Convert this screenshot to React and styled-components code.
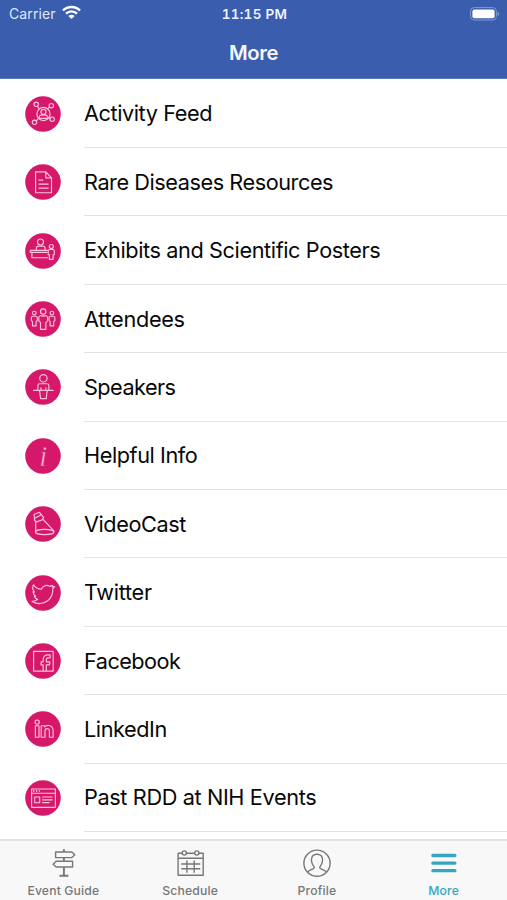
import React from "react";
import styled, { createGlobalStyle } from "styled-components";

const GlobalStyle = createGlobalStyle`
  * { box-sizing: border-box; }
  html, body { margin: 0; padding: 0; background: #fff; overflow: hidden; }
`;

const Screen = styled.div`
  width: 507px;
  height: 900px;
  display: flex;
  flex-direction: column;
  overflow: hidden;
  background: #fff;
  font-family: Inter, "Liberation Sans", sans-serif;
`;

const Header = styled.header`
  flex: 0 0 79px;
  background: #3a5dae;
  border-bottom: 1px solid #5c78ba;
  color: #fff;
`;

const StatusBar = styled.div`
  height: 27px;
  display: grid;
  grid-template-columns: 1fr auto 1fr;
  align-items: center;
  padding: 0 7px 0 9px;
`;

const Carrier = styled.div`
  display: flex;
  align-items: center;
  gap: 6px;
  font-size: 14px;
  letter-spacing: 0.12px;
  color: #dfe8fb;
`;

const Wifi = styled.svg`
  display: block;
  margin-bottom: 2px;
`;

const Clock = styled.div`
  font-size: 13.5px;
  font-weight: 600;
  font-variant-numeric: tabular-nums;
  letter-spacing: 0.3px;
  color: #eef3ff;
`;

const Battery = styled.svg`
  justify-self: end;
  display: block;
`;

const Title = styled.h1`
  margin: 0;
  height: 51px;
  line-height: 51px;
  text-align: center;
  font-size: 20.3px;
  font-weight: 600;
  letter-spacing: -0.4px;
  color: #f4f7ff;
`;

const Menu = styled.ul`
  flex: 1 1 0;
  min-height: 0;
  margin: 0;
  padding: 0.7px 0 0;
  list-style: none;
  overflow: hidden;
`;

const Row = styled.li`
  height: 68.4px;
  display: flex;
  align-items: center;
  padding-left: 24.6px;
`;

const Badge = styled.svg`
  flex: 0 0 36px;
  width: 36px;
  height: 36px;
  margin-right: 23.4px;
  fill: none;
  stroke: #fac3dc;
  stroke-width: 1.15;
  stroke-linejoin: round;
  stroke-linecap: round;
`;

const Label = styled.div`
  flex: 1;
  height: 100%;
  display: flex;
  align-items: center;
  border-bottom: 1px solid #e3e3e5;
  color: #080808;
  font-size: 21.7px;
  letter-spacing: ${(p) => p.$spacing}px;
  white-space: nowrap;
`;

const TabBar = styled.nav`
  flex: 0 0 61px;
  display: grid;
  grid-template-columns: repeat(4, 1fr);
  background: #f8f8f8;
  border-top: 2px solid #e2e2e3;
`;

const Tab = styled.div`
  display: flex;
  flex-direction: column;
  align-items: center;
  padding-top: 7px;
  color: ${(p) => (p.$active ? "#35a5c0" : "#777")};
`;

const TabIcon = styled.svg`
  width: 30px;
  height: 30px;
  fill: none;
  stroke: currentColor;
  stroke-width: 1.4;
  stroke-linejoin: round;
`;

const TabLabel = styled.span`
  margin-top: 5px;
  font-size: 12.2px;
  line-height: 16px;
  font-weight: 500;
  letter-spacing: 0.15px;
`;

const InfoGlyph = styled.text`
  font: italic 29px "Liberation Serif", serif;
  fill: #f6b3d2;
  stroke: #d51869;
  stroke-width: 0.5;
`;

const items = [
  {
    label: "Activity Feed",
    spacing: -0.42,
    icon: (
      <>
        <circle cx="18.5" cy="18" r="6.6" />
        <circle cx="18.5" cy="15.9" r="2.5" />
        <path d="M14.2 22.4v-1.1c0-1.7 1.6-2.5 4.3-2.5s4.3.8 4.3 2.5v1.1zM12.3 10.2l2 2.6M24.5 11.3l-2.2 1.8M11.1 24.8l2.4-2.2M25.1 22.6l-1.8-.9" />
        <circle cx="11.2" cy="8.3" r="2.2" />
        <circle cx="26.3" cy="9.7" r="2.2" />
        <circle cx="9.5" cy="26.3" r="2.2" />
        <circle cx="27.2" cy="23.2" r="2.2" />
      </>
    ),
  },
  {
    label: "Rare Diseases Resources",
    spacing: -0.45,
    icon: (
      <path d="M10.6 7.8h10.2l5.7 6v14.9H10.6zM20.8 7.8v6h5.7M14 16.1h3.8M14 20.1h9.2M14 24.1h9.2" />
    ),
  },
  {
    label: "Exhibits and Scientific Posters",
    spacing: -0.4,
    icon: (
      <>
        <circle cx="15.5" cy="9" r="3" />
        <path d="M11.4 17.2v-2.1c0-1.3.9-2 2.2-2h4.1c1.4 0 2.4.7 2.4 2v2.1M22.6 17.4H5.2v2h1.7v5.3h15.9M6.9 19.4h14.9" />
        <circle cx="26.3" cy="13.5" r="2" />
        <path d="M24.6 16.5h3.3c.9 0 1.4.6 1.4 1.4v3.8h-1.2v4.7h-3.7v-4.7h-1.2v-3.8c0-.8.6-1.4 1.4-1.4z" />
      </>
    ),
  },
  {
    label: "Attendees",
    spacing: -0.3,
    icon: (
      <>
        <circle cx="18.2" cy="10.6" r="2.7" />
        <path d="M15.7 14.5c.7.8 4.3.8 5 0 1.2.2 1.9 1 1.9 2.3v2.4c0 1.1-.5 1.7-1.7 2v7.1h-5.4v-7.1c-1.2-.3-1.7-.9-1.7-2v-2.4c0-1.3.7-2.1 1.9-2.3z" />
        <circle cx="9.3" cy="12" r="1.8" />
        <path d="M7.8 15.2h3c.9 0 1.5.6 1.5 1.5v2.9l-1.2.8v4.5H7.5v-4.5l-1.1-.8v-2.9c0-.9.6-1.5 1.4-1.5z" />
        <circle cx="26.9" cy="12" r="1.8" />
        <path d="M25.4 15.2h3c.9 0 1.5.6 1.5 1.5v2.9l-1.2.8v4.5h-3.6v-4.5l-1.1-.8v-2.9c0-.9.6-1.5 1.4-1.5z" />
      </>
    ),
  },
  {
    label: "Speakers",
    spacing: -0.55,
    icon: (
      <>
        <circle cx="18.4" cy="9.3" r="3.7" />
        <path d="M12.9 21.3v-4.8c0-1.2.7-1.8 1.8-1.8h7.4c1.1 0 1.8.6 1.8 1.8v4.8M8.6 21.4h19.6M14.5 21.4l1.1 8.2h5.6l1-8.2M16 18.8v2.4M20.9 18.8v2.4" />
      </>
    ),
  },
  {
    label: "Helpful Info",
    spacing: -0.43,
    icon: <InfoGlyph x="14.2" y="28">i</InfoGlyph>,
  },
  {
    label: "VideoCast",
    spacing: -0.42,
    icon: (
      <>
        <path d="M9.1 8.5l5.3-2.2 4.2 5-1.2 2.4-5.6 2.2-2.2-1.5zM9.7 12.2l6.5-3.4M10.7 15.7v9.7M18 13.3l10.8 11.6" />
        <ellipse cx="19.7" cy="26" rx="9.3" ry="2.6" />
      </>
    ),
  },
  {
    label: "Twitter",
    spacing: -0.3,
    icon: (
      <path d="M8.5 9.8c1.8 2.6 4.4 4.1 7.8 4.5.4-1.4 1.6-2.5 3.1-3.2 2-1 3.8-.8 5.4.3l3-1-.6 1.5 2.4-.3-1.8 2.2c.3 4.4-1.6 9.1-5.2 12-4 3.2-10.1 3.9-15.4.6 2.5-.1 4-.7 5.6-2-2-.5-3.1-1.6-3.5-3.2h1.5c-1.7-1-2.7-2.6-2.8-4.5l1.5.4c-1.7-1.9-2.3-4.6-1-7.3z" />
    ),
  },
  {
    label: "Facebook",
    spacing: -0.53,
    icon: (
      <path d="M8.6 8.4h19.6v19.7H8.6zM18.2 28v-6.1h-2.1v-3.1h2.1v-1.9c0-3.3 1.7-5 4.7-5h2.2v3h-1.8c-1.5 0-2 .7-2 2v1.9h3.6l-.5 3.1h-3.1V28" />
    ),
  },
  {
    label: "LinkedIn",
    spacing: -0.43,
    icon: (
      <>
        <circle cx="12.2" cy="11.1" r="2.1" />
        <path d="M10.4 14.7H14v11.5h-3.6zM16.2 14.7h3.6v1.2c2.2-2.5 8.3-1.9 8.3 3.6v6.7h-3.7v-6.1c0-3.4-4.4-3.2-4.4 0v6.1h-3.8z" />
      </>
    ),
  },
  {
    label: "Past RDD at NIH Events",
    spacing: -0.37,
    icon: (
      <>
        <path d="M6.6 9h23.8v18.3H6.6zM6.6 13.2h23.8M9.7 17h5v5.7h-5zM17.5 17h9.7M17.5 19.8h9.7M17.5 22.6h6.7" />
        <path d="M8.2 11.1h6.5" strokeWidth="2" strokeDasharray="1.2 1.6" strokeLinecap="butt" />
      </>
    ),
  },
];

const tabs = [
  {
    label: "Event Guide",
    icon: (
      <>
        <path d="M7.6 4h16.2l3 2.8-3 2.8H7.6zM24.6 13.3H8.2l-3.1 2.9 3.1 2.8h16.4z" />
        <path d="M15.9 1.2V4M15.9 9.6v3.7M15.9 19v8.5M11.5 27.7h8.9" strokeWidth="1.9" />
      </>
    ),
  },
  {
    label: "Schedule",
    icon: (
      <>
        <path d="M7.3 5.2H3.1v22h25.1v-22h-4.4M11.3 5.2h8.4M3.1 10.3h25.1M6.2 16h19.1M6.2 20.8h19.1M11.9 12.5v12.3M19.2 12.5v12.3" />
        <circle cx="9.3" cy="5" r="2.1" />
        <circle cx="21.8" cy="5" r="2.1" />
      </>
    ),
  },
  {
    label: "Profile",
    icon: (
      <>
        <circle cx="15" cy="15.2" r="13.1" />
        <path d="M5.6 24.1c.8-1.2 2-1.9 3.7-2.5 2-.7 3-1 3-2.2 0-1-2.9-3-2.9-7.1 0-3.7 2.2-6 5.6-6s5.6 2.3 5.6 6c0 4.1-2.9 6.1-2.9 7.1 0 1.2 1 1.5 3 2.2 1.7.6 2.9 1.3 3.7 2.5" />
      </>
    ),
  },
  {
    label: "More",
    active: true,
    icon: (
      <path d="M3.9 7.5h22M3.9 15.1h22M3.9 22.7h22" strokeWidth="3.3" strokeLinecap="round" />
    ),
  },
];

export default function App() {
  return (
    <Screen>
      <GlobalStyle />
      <Header>
        <StatusBar>
          <Carrier>
            Carrier
            <Wifi width="19" height="15" viewBox="0 0 18 14" fill="none" stroke="#fff" strokeWidth="2.3">
              <path d="M.9 5.1c4.5-4.4 11.7-4.4 16.2 0M3.8 8c2.9-2.8 7.5-2.8 10.4 0" />
              <path d="M6 10.2c1.7-1.5 4.3-1.5 6 0l-3 3z" fill="#fff" stroke="none" />
            </Wifi>
          </Carrier>
          <Clock>11:15 PM</Clock>
          <Battery width="30" height="14" viewBox="0 0 30 14">
            <rect x=".6" y=".6" width="25.8" height="12.4" rx="3.6" fill="none" stroke="#7f99d2" />
            <rect x="2.4" y="2.4" width="22.2" height="8.8" rx="2" fill="#fff" />
            <path d="M27.6 4.7c2.2.8 2.2 3.6 0 4.4z" fill="#7f99d2" />
          </Battery>
        </StatusBar>
        <Title>More</Title>
      </Header>
      <Menu>
        {items.map((item) => (
          <Row key={item.label}>
            <Badge viewBox="0 0 36 36">
              <circle cx="18" cy="18" r="17.8" fill="#d51869" stroke="none" />
              {item.icon}
            </Badge>
            <Label $spacing={item.spacing}>{item.label}</Label>
          </Row>
        ))}
      </Menu>
      <TabBar>
        {tabs.map((tab) => (
          <Tab key={tab.label} $active={tab.active}>
            <TabIcon viewBox="0 0 30 30">{tab.icon}</TabIcon>
            <TabLabel>{tab.label}</TabLabel>
          </Tab>
        ))}
      </TabBar>
    </Screen>
  );
}
